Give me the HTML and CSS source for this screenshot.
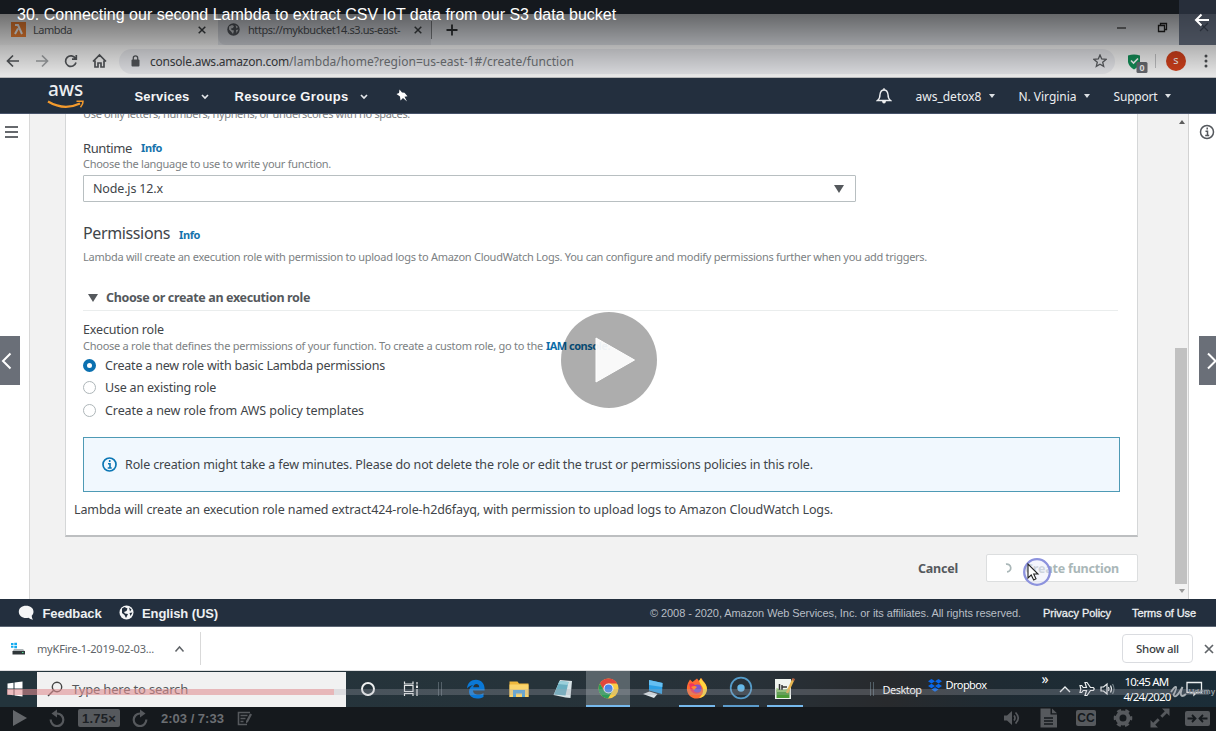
FILE: index.html
```
<!DOCTYPE html>
<html lang="en">
<head>
<meta charset="utf-8">
<title>Lambda lecture player</title>
<link rel="stylesheet" href="styles.css">
</head>
<body>
<div class="player">
  <header class="lecture-title"><span>30. Connecting our second Lambda to extract CSV IoT data from our S3 data bucket</span></header>

  <div class="tabs">
    <div class="tab tab-active">
      <svg class="fav" width="15" height="15" viewBox="0 0 15 15"><rect width="15" height="15" fill="#f58534"/><path d="M4 3h3l4 9M7 6.5 4 12" fill="none" stroke="#fff" stroke-width="2"/></svg>
      <span class="tab-name">Lambda</span>
      <svg class="x" width="8" height="8" viewBox="0 0 8 8"><path d="M.7.7l6.6 6.6M7.3.7.7 7.3" stroke="#3c4043" stroke-width="1.5"/></svg>
    </div>
    <div class="tab tab-second">
      <svg class="fav" width="13" height="13" viewBox="0 0 13 13"><circle cx="6.5" cy="6.5" r="6.2" fill="#50545a"/><path d="M2 3.5 5 2l2 1-1 2-2 .5L4.500 7 7 7.500 6 11 4.500 9 2 6.500zM8.500 2l2.500 2-1.500 1.500zM9 7l2.500-.5L9.500 10z" fill="#c4c7cb"/></svg>
      <span class="tab-url">https://mykbucket14.s3.us-east-</span>
      <svg class="x" width="8" height="8" viewBox="0 0 8 8"><path d="M.7.7l6.6 6.6M7.3.7.7 7.3" stroke="#3c4043" stroke-width="1.5"/></svg>
    </div>
    <i class="tab-sep"></i>
    <svg class="plus" width="12" height="12" viewBox="0 0 12 12"><path d="M6 .5v11M.5 6h11" stroke="#303336" stroke-width="1.8"/></svg>
    <svg class="win" width="90" height="14" viewBox="0 0 90 14"><path d="M1 8h9" stroke="#303030" stroke-width="1.2"/><path d="M42.500 5.500h6v6h-6zM44.500 5V3.500h6v6H49" fill="none" stroke="#202020" stroke-width="1.3"/><path d="m84 3 8 8m0-8-8 8" stroke="#222" stroke-width="1.2"/></svg>
  </div>

  <div class="toolbar">
    <svg width="110" height="20" viewBox="0 0 110 20" fill="none" stroke="#55585c" stroke-width="1.7"><path d="M19 10H7.500M13 4.500 7.500 10l5.500 5.500"/><path stroke="#a2a5a8" d="M36 10h11.500M42 4.500l5.500 5.500-5.500 5.500"/><path d="M75.500 7.500A5.300 5.300 0 1 0 76 11.500M76.300 4v4.200H72"/><path d="M93 10.500 99.500 4l6.500 6.500M95 9.500V16h3v-4h3v4h3V9.500"/></svg>
    <div class="omnibox">
      <svg class="lock" width="9" height="12" viewBox="0 0 9 12"><rect x=".5" y="4.500" width="8" height="7" rx="1" fill="#55585c"/><path d="M2.300 5V3a2.200 2.200 0 0 1 4.400 0v2" fill="none" stroke="#55585c" stroke-width="1.300"/></svg>
      <span class="host">console.aws.amazon.com</span><span class="path">/lambda/home?region=us-east-1#/create/function</span>
      <svg class="star" width="14" height="14" viewBox="0 0 14 14"><path d="m7 1 1.700 4 4.300.4-3.300 2.800 1 4.200L7 10.200l-3.700 2.200 1-4.200L1 5.400 5.300 5z" fill="none" stroke="#5c5f63" stroke-width="1.300"/></svg>
    </div>
    <svg class="shield" width="22" height="20" viewBox="0 0 22 20"><path d="M2 2.500Q8 .3 14 2.500V9q-1 5-6 7.500Q3 14 2 9z" fill="#13935a"/><path d="m5 7.500 2.500 2.500L12 5.500" stroke="#fff" stroke-width="1.600" fill="none"/><rect x="10.500" y="9" width="11" height="11" rx="1.500" fill="#6a6d73"/><text class="badge" x="16" y="18">0</text></svg>
    <i class="tool-sep"></i>
    <span class="avatar">s</span>
    <svg class="dots" width="4" height="14" viewBox="0 0 4 14" fill="#505356"><circle cx="2" cy="2" r="1.500"/><circle cx="2" cy="7" r="1.500"/><circle cx="2" cy="12" r="1.500"/></svg>
  </div>

  <nav class="aws">
    <div class="logo"><span>aws</span><svg width="38" height="10" viewBox="0 0 38 10"><path d="M1 1.500Q17 11 33 3.500" fill="none" stroke="#f39a2d" stroke-width="2.200"/><path d="m29.500 1.300 6.500-.1q.3 3-2.500 6" fill="none" stroke="#f39a2d" stroke-width="1.600"/></svg></div>
    <span class="services">Services</span><svg class="chev c1" width="8" height="6" viewBox="0 0 8 6"><path d="m1 1 3 3 3-3" fill="none" stroke="#e5e8eb" stroke-width="1.700"/></svg>
    <span class="groups">Resource Groups</span><svg class="chev c2" width="8" height="6" viewBox="0 0 8 6"><path d="m1 1 3 3 3-3" fill="none" stroke="#e5e8eb" stroke-width="1.700"/></svg>
    <svg class="pin" width="12" height="13" viewBox="0 0 12 13"><path d="m3.500.5 2.500 3 2.500.3 3 3.500-3 .5 2.500 4.700L7 9l-2.500 2.500-.5-4L.5 5 3 4z" fill="#fff"/></svg>
    <svg class="bell" width="16" height="16" viewBox="0 0 16 16"><path d="M1.500 12.500h13q-2.500-2-2.500-6Q11.500 2 8 2T4 6.500q0 4-2.500 6z" fill="none" stroke="#eceef0" stroke-width="1.400"/><path d="M8 .3v2" stroke="#eee" stroke-width="1.500"/><path d="M6 13h4q-.3 2.500-2 2.500T6 13" fill="#eee"/></svg>
    <span class="user">aws_detox8</span><i class="caret"></i>
    <span class="region">N. Virginia</span><i class="caret"></i>
    <span class="support">Support</span><i class="caret"></i>
  </nav>

  <main class="console">
    <aside class="left-rail"><i></i><i></i><i></i></aside>
    <section class="work">
      <div class="card">
        <p class="hint cut">Use only letters, numbers, hyphens, or underscores with no spaces.</p>
        <div class="label runtime"><span>Runtime</span><a class="info">Info</a></div>
        <p class="hint choose">Choose the language to use to write your function.</p>
        <div class="select"><span>Node.js 12.x</span><i class="tri"></i></div>
        <div class="heading"><span>Permissions</span><a class="info">Info</a></div>
        <p class="hint perm">Lambda will create an execution role with permission to upload logs to Amazon CloudWatch Logs. You can configure and modify permissions further when you add triggers.</p>
        <div class="expand"><i class="tri"></i><span>Choose or create an execution role</span></div>
        <div class="label exec">Execution role</div>
        <p class="hint iam"><span>Choose a role that defines the permissions of your function. To create a custom role, go to the</span><a>IAM console.</a></p>
        <div class="radio"><i class="dot on"></i><span class="r1">Create a new role with basic Lambda permissions</span></div>
        <div class="radio"><i class="dot"></i><span class="r2">Use an existing role</span></div>
        <div class="radio"><i class="dot"></i><span class="r3">Create a new role from AWS policy templates</span></div>
        <div class="alert">
          <svg width="15" height="15" viewBox="0 0 15 15"><circle cx="7.500" cy="7.500" r="6.500" fill="none" stroke="#0b76b4" stroke-width="1.700"/><path d="M7.700 3v2M6 6.700h2v4M5.700 11h4" fill="none" stroke="#0b76b4" stroke-width="1.600"/></svg>
          <span>Role creation might take a few minutes. Please do not delete the role or edit the trust or permissions policies in this role.</span>
        </div>
        <p class="summary">Lambda will create an execution role named extract424-role-h2d6fayq, with permission to upload logs to Amazon CloudWatch Logs.</p>
      </div>
      <div class="actions">
        <span class="cancel">Cancel</span>
        <div class="create"><svg width="12" height="12" viewBox="0 0 12 12"><path d="M4 2.200A3.900 3.900 0 1 1 5 9.900" fill="none" stroke="#aab7b8" stroke-width="1.700"/></svg><span>Create function</span>
          <svg class="pointer" width="32" height="32" viewBox="0 0 32 32"><circle cx="16" cy="16" r="12.800" fill="rgba(235,236,250,.55)" stroke="#8c92dd" stroke-width="2.300"/><path d="M7 8v14l3.200-3 2.500 5 2.300-1.200-2.300-4.800h4.300z" fill="#fff" stroke="#222" stroke-width="1.100"/></svg>
        </div>
      </div>
    </section>
    <div class="scroll"><i class="up"></i><i class="thumb"></i><i class="down"></i></div>
    <aside class="right-rail"><svg width="16" height="16" viewBox="0 0 16 16"><circle cx="8" cy="8" r="6.500" fill="none" stroke="#54585d" stroke-width="1.500"/><path d="M8.200 3.500v2M6.500 7.200h2v4M6.200 11.500h4" fill="none" stroke="#54585d" stroke-width="1.500"/></svg></aside>
  </main>

  <footer class="aws-footer">
    <svg class="bubble" width="17" height="16" viewBox="0 0 17 16"><path d="M8 .8c4.500 0 7.500 2.500 7.500 6 0 1.700-.8 3-1.800 4q0 2 1.300 4-3-.7-4.500-2C5 14 .8 11 .8 6.800.8 3.300 3.700.8 8 .8" fill="#f4f5f6"/></svg>
    <span class="feedback">Feedback</span>
    <svg class="globe" width="15" height="15" viewBox="0 0 15 15"><circle cx="7.500" cy="7.500" r="7" fill="#f4f5f6"/><path d="M3 3.500 5.500 2l3 1.500-1 2.500L5 7l1 1.500 3 .5-2 4-1.500-3L3 8zM10 2.500l2.500 2-1.500 2zM10.500 8l3-.5-2 3.500z" fill="#232f3e"/></svg>
    <span class="language">English (US)</span>
    <span class="copyright">© 2008 - 2020, Amazon Web Services, Inc. or its affiliates. All rights reserved.</span>
    <span class="privacy">Privacy Policy</span><span class="terms">Terms of Use</span>
  </footer>

  <div class="downloads">
    <svg class="drive" width="15" height="14" viewBox="0 0 15 14"><path d="M0 1h2.500v2H0zM3.300.7H6V3H3.300zM0 3.800h2.500v2H0zM3.300 3.800H6v2.400H3.300z" fill="#12aaf0"/><path d="M3 7h9l2 2.500H1.500z" fill="#aeb5b8"/><path d="M1.500 9H14v3.500H1.500z" fill="#30373a"/><path d="M11 10.500h1.500" stroke="#4fe092"/></svg>
    <span class="file">myKFire-1-2019-02-03...</span>
    <svg class="expand-up" width="11" height="8" viewBox="0 0 11 8"><path d="m1.500 6.500 4-4.500 4 4.500" fill="none" stroke="#606468" stroke-width="1.500"/></svg>
    <i class="dl-sep"></i>
    <span class="show-all"><b>Show all</b></span>
    <svg class="dl-x" width="10" height="10" viewBox="0 0 10 10"><path d="m1 1 8 8m0-8-8 8" stroke="#606468" stroke-width="1.700"/></svg>
  </div>

  <div class="taskbar">
    <svg class="start" width="16" height="16" viewBox="0 0 16 16" fill="#fff"><path d="M.5 2.500 6.500 1.700v5.800h-6zM7.500 1.500 15.500.5v7h-8zM.5 8.500h6v5.800l-6-.8zM7.500 8.500h8v7l-8-1z"/></svg>
    <div class="search"><svg width="16" height="16" viewBox="0 0 16 16"><circle cx="10" cy="6" r="4.700" fill="none" stroke="#444" stroke-width="1.400"/><path d="M6.500 9.500 1 15" stroke="#444" stroke-width="1.500"/></svg><span>Type here to search</span></div>
    <div class="cell c-cortana"><svg width="16" height="16" viewBox="0 0 16 16"><circle cx="8" cy="8" r="6" fill="none" stroke="#eef0f0" stroke-width="2"/></svg></div>
    <div class="cell c-task"><svg width="16" height="16" viewBox="0 0 16 16" fill="none" stroke="#e3e6e7" stroke-width="1.200"><path d="M1.500 4.500h8.500v6H1.500zM1.500.5V3H10V.5M1.500 15v-2.500H10V15M14 1v2.500M14 8v7"/><path d="M14 4.500v2.500" stroke-width="2"/></svg></div>
    <div class="cell c-grip"><i></i><i></i></div>
    <div class="cell c-edge"><svg width="20" height="20" viewBox="0 0 20 20"><path d="M1 9.500C1.500 4 5 .8 10 .8c5.500 0 8.600 4 8.600 9v1.700H7c.2 3 2.500 4 5 4 2 0 3.800-.5 5.500-1.500v4c-2 1-4 1.500-6.500 1.500-5 0-8-3-8-7 0-3 1.700-5 4.200-6.200C4.500 6.500 2.500 7.500 1 9.500M7.200 8.200h6C13.200 6 12 5 10.300 5S7.500 6.300 7.200 8.200" fill="#0a78d6"/></svg></div>
    <div class="cell c-folder"><svg width="20" height="18" viewBox="0 0 20 18"><path d="M.5 1.500h8l1.500 2h9.500V17H.5z" fill="#efb83d"/><path d="M.5 4.500h19V17H.5z" fill="#fad46c"/><path d="M4 10h12v7h-3v-3.500H7V17H4z" fill="#57a6d9"/></svg></div>
    <div class="cell c-note"><svg width="20" height="20" viewBox="0 0 20 20"><path d="m7 1 12 1-1.500 17-5-.5L.5 16z" fill="#d8e3e6"/><path d="m6.500 2 9 1-3 13.500L1 15.500z" fill="#6aafc1"/><path d="m6.500 2 9 1-.8 3-9.500-1z" fill="#9ad0db"/></svg></div>
    <div class="cell c-chrome running"><svg width="21" height="21" viewBox="0 0 21 21"><circle cx="10.500" cy="10.500" r="10" fill="#f9cd45"/><path d="M1.900 5.400A10 10 0 0 1 19.200 5.500H10.500L6.200 13z" fill="#e2473c"/><path d="M1.900 5.400A10 10 0 0 0 10 20.500l4.500-7.500H6.200z" fill="#2b9d58"/><circle cx="10.500" cy="10.500" r="5" fill="#f5f7fa"/><circle cx="10.500" cy="10.500" r="4" fill="#4a86ea"/></svg></div>
    <div class="cell c-pc"><svg width="22" height="20" viewBox="0 0 22 20"><path d="m7 1 13.500 3-.5 11L7 11.500z" fill="#2da0e5"/><path d="m7 1 13.500 3-.2 4L7 6z" fill="#65bff2"/><path d="m1 15 6.500-2.500 8 2.500-3.500 4z" fill="#dce3e7"/></svg></div>
    <div class="cell c-fox"><svg width="22" height="22" viewBox="0 0 22 22"><path d="M2 6l2-3.500L6.500 5 11 1.500 13 4l2-3c2 2 2 3 3.500 4.500C23 11 20.500 21.500 11 21.500 2 21.500-1 13 2 6" fill="#ff6b32"/><path d="M15 1c.5 3 6 5 6 11 0 5-4 9-8 9 3-3 4.500-5 4-9-.5-3-2.500-4-4-8z" fill="#ffd53f"/><path d="M3 7q4-2 6 1l5 1q3 4-1 7-5 2-8-2z" fill="#f3355e"/><circle cx="11.500" cy="11.500" r="4" fill="#8054c8"/><path d="M5 10q4-2 6 0l-3 3z" fill="#ff8c32"/></svg></div>
    <div class="cell c-rec"><svg width="24" height="24" viewBox="0 0 24 24"><circle cx="12" cy="12" r="10.300" fill="none" stroke="#559bc8" stroke-width="1.700"/><circle cx="12" cy="12" r="3.700" fill="#66b9e8"/></svg></div>
    <div class="cell c-img"><svg width="21" height="23" viewBox="0 0 21 23"><path d="M1 2h16v20H1z" fill="#f0f4ef"/><path d="M2.500 13h13v8h-13z" fill="#4b9b36"/><path d="M2.500 11q6 3 13 0v4h-13z" fill="#91c86d"/><path d="M5.500 7v6M8 8v5M8 10h5" stroke="#333" stroke-width="1.500"/><path d="m19.500 2-6.500 14" stroke="#e7b550" stroke-width="2.500"/><path d="m18.500 2 2 1" stroke="#b05a43" stroke-width="2"/></svg></div>
    <div class="cell c-grip2"><i></i><i></i></div>
    <span class="desktop">Desktop</span>
    <svg class="dbx" width="14" height="13" viewBox="0 0 14 13" fill="#0968eb"><path d="m3.500 0 3.500 2.200-3.500 2.300L0 2.200zM10.500 0 14 2.200l-3.500 2.300L7 2.200zM3.500 4.700 7 7 3.500 9.200 0 7zM10.500 4.700 14 7l-3.500 2.200L7 7zM7 8.200l3.500 2.200L7 12.700l-3.500-2.300z"/></svg>
    <span class="dropbox">Dropbox</span>
    <span class="more">»</span>
    <svg class="tray" width="58" height="18" viewBox="0 0 58 18" fill="none" stroke="#eceff0" stroke-width="1.200"><path d="m2 12 5-5 5 5" stroke-width="1.400"/><path d="M22 5.500h1.700l1.500 2h3.300L27 2.500h2l3.500 5h2.700q2 1.500 0 3h-2.700l-3.500 5h-2l1.500-5h-3.300l-1.500 2H22l.8-3.500z"/><path d="M43 7h2.500L49 4v10l-3.500-3H43z"/><path d="M50.500 7q1 2 0 4M52.500 5.500q2 3.500 0 7"/><path d="M54.500 4q3 5 0 10" stroke="#76838a"/></svg>
    <div class="clock"><span class="time">10:45 AM</span><span class="date">4/24/2020</span></div>
    <div class="notify"><svg width="17" height="16" viewBox="0 0 17 16"><path d="M1 1.500h14.500v10h-5L8 14v-2.500H1z" fill="none" stroke="#eceff0" stroke-width="1.300"/></svg><svg class="u" width="17" height="14" viewBox="0 0 17 14"><path d="M1 7Q5 1 6 2T3.500 10q2 5 9-8-3 8-.5 9 2 0 4-2" fill="none" stroke="#aab1b5" stroke-width="1.800"/></svg><span class="udemy">Udemy</span></div>
  </div>

  <div class="controls">
    <svg class="k-play" width="16" height="18" viewBox="0 0 16 18"><path d="M1 1v16l14-8z" fill="#63666a"/></svg>
    <svg class="k-back" width="16" height="18" viewBox="0 0 16 18"><path d="M8 4.500A6.300 6.300 0 1 1 1.700 10.500" fill="none" stroke="#56595d" stroke-width="2.200"/><path d="M8 .5v8L2.500 4.500z" fill="#56595d"/></svg>
    <span class="speed"><b>1.75×</b></span>
    <svg class="k-fwd" width="16" height="18" viewBox="0 0 16 18"><path d="M8 4.500A6.300 6.300 0 1 0 14.300 10.500" fill="none" stroke="#56595d" stroke-width="2.200"/><path d="M8 .5v8l5.500-4z" fill="#56595d"/></svg>
    <span class="elapsed">2:03 / 7:33</span>
    <svg class="k-note" width="16" height="15" viewBox="0 0 16 15" fill="none" stroke="#56595d" stroke-width="1.600"><path d="M10 13.500H1.500v-12H13M3.500 4.500h7M3.500 7.500h5M3.500 10.500h3"/><path d="m9 10 4-7.500 2 1-4 7.500-2 1.500z" fill="#56595d" stroke="none"/></svg>
    <svg class="k-vol" width="19" height="16" viewBox="0 0 19 16"><path d="M1 5.500h3L9 1v14l-5-4.500H1z" fill="#56595d"/><path d="M11 5.500q2 2.500 0 5M12.500 2.500q5.500 5.500 0 11" fill="none" stroke="#56595d" stroke-width="1.700"/></svg>
    <svg class="k-doc" width="18" height="20" viewBox="0 0 18 20"><path d="M.5.500h10v6h6.500v13H.5zM12 .5l5 4.700h-5z" fill="#56595d"/><path d="M4 10h9M4 13h9M4 16h9" stroke="#15191d" stroke-width="1.300"/></svg>
    <span class="cc">CC</span>
    <svg class="k-gear" width="20" height="20" viewBox="0 0 20 20"><circle cx="10" cy="10" r="5.500" fill="none" stroke="#56595d" stroke-width="4"/><circle cx="10" cy="10" r="7.800" fill="none" stroke="#56595d" stroke-width="3" stroke-dasharray="4.084 4.084" stroke-dashoffset="2.042"/></svg>
    <svg class="k-full" width="20" height="20" viewBox="0 0 20 20"><path d="M12 .5h7.500V8l-2.700-2.700-4.500 4.500-2-2 4.500-4.500zM8 19.500H.5V12l2.700 2.700 4.500-4.500 2 2-4.500 4.500z" fill="#56595d"/></svg>
    <svg class="k-wide" width="25" height="15" viewBox="0 0 25 15"><rect width="25" height="15" rx="2" fill="#56595d"/><path d="M2.500 7.500H10M7 4l3.500 3.500L7 11M22.500 7.500H15M18 4l-3.500 3.500L18 11" stroke="#15191d" stroke-width="1.800" fill="none"/></svg>
  </div>

  <div class="shade"></div>
  <div class="back"><svg width="16" height="14" viewBox="0 0 16 14"><path d="M15 7H2M7.500 1.500 2 7l5.500 5.500" fill="none" stroke="#fff" stroke-width="2"/></svg></div>
  <div class="progress"><i></i></div>
  <div class="prev"><svg width="12" height="18" viewBox="0 0 12 18"><path d="M10.500 1.500 3 9l7.500 7.500" fill="none" stroke="#fff" stroke-width="2"/></svg></div>
  <div class="next"><svg width="12" height="18" viewBox="0 0 12 18"><path d="M2 1.500 9.500 9 2 16.500" fill="none" stroke="#fff" stroke-width="2"/></svg></div>
  <div class="big-play"><svg width="42" height="48" viewBox="0 0 42 48"><path d="M2 2v44l38.500-22z" fill="#fff" fill-opacity=".93" stroke="#fff" stroke-linejoin="round"/></svg></div>
</div>
</body>
</html>
```
FILE: styles.css
```
*{box-sizing:border-box}
body{margin:0;background:#15191d;font-family:"Noto Sans",sans-serif;color:#3f4549;white-space:nowrap}
p{margin:0}
i{display:block;flex:none}
svg{display:block;flex:none}
span{flex:none}
.player{position:relative;width:1216px;height:731px;overflow:hidden;display:grid;grid-template-rows:14px 31px 33px 36px 485px 28px 44px 36px 24px}

/* lecture header */
.lecture-title{position:relative;z-index:3;background:#15191e;padding-left:17px;font:16px/30px "Liberation Sans",sans-serif;color:#fff;height:14px}

/* browser tabs */
.tabs{display:flex;align-items:center;background:#dee1e6;font-size:11px}
.tab{display:flex;align-items:center;height:31px}
.tab-active{width:218px;background:#f4f4f4;padding-left:11px}
.tab-name{width:166px;margin-left:7px;letter-spacing:-.48px;color:#55585c;margin-right:-1px}
.tab-second{width:213px;background:#d0d3d9;border-bottom-left-radius:8px;padding-left:9px}
.tab-url{width:166px;margin-left:8px;letter-spacing:-.43px;color:#4b4f53}
.tab-sep{width:1px;height:18px;background:#7c7f83;margin:0 14px 0 0}
.plus{margin-right:658px}
.win{margin-top:-5px;overflow:visible}

/* address row */
.toolbar{display:flex;align-items:center;background:#fbfbfb;border-bottom:1px solid #c3c5c7}
.omnibox{display:flex;align-items:center;width:996px;height:25px;margin-left:9px;padding-left:12px;border-radius:13px;background:#ebecf0;font-size:12px}
.host{width:139px;margin-left:10px;letter-spacing:-.232px;color:#3c4043}
.path{width:285px;letter-spacing:.049px;color:#73777b}
.star{margin-left:519px}
.shield{margin:3px 0 0 11px}
.badge{font:bold 9px "Liberation Sans",sans-serif;fill:#fff;text-anchor:middle}
.tool-sep{width:1px;height:14px;background:#c4c5c7;margin-left:7px}
.avatar{width:20px;height:20px;border-radius:50%;background:#d7421c;color:#fff;font-size:11px;line-height:18px;text-align:center;margin-left:10px}
.dots{margin-left:17.5px}

/* aws nav */
.aws{display:flex;align-items:center;background:#232f3e;border-bottom:1px solid #47536a;color:#eceef0;font-size:12px}
.logo{width:87.5px;margin-left:47px;height:30px;padding-left:1px}
.logo span{display:block;font:500 19px/19px "Noto Sans",sans-serif;letter-spacing:-.1px;margin-top:-1px}
.logo svg{margin:1px 0 0 -1px}
.services,.groups{font:bold 13px "Liberation Sans",sans-serif;color:#f5f6f7;margin-top:1px}
.services{width:55px;letter-spacing:.188px}
.c1{margin:3px 26px 0 11px}
.groups{width:115px;letter-spacing:.327px}
.c2{margin:3px 0 0 10px}
.pin{margin-left:28px}
.bell{margin:0 24px 0 468px}
.user{width:66px}.region{width:58px;letter-spacing:-.028px}.support{width:44px;letter-spacing:-.188px}
.user,.region,.support{margin-top:1px}
.caret{border:3.5px solid transparent;border-top:4px solid #dce0e3;border-bottom:0;margin-left:7px;margin-top:1px}
.region{margin-left:24px}.support{margin-left:24px}

/* console */
.console{display:grid;grid-template-columns:30px 1145px 14px 27px;background:#f2f2f2;overflow:hidden}
.left-rail{background:#fff;border-right:1px solid #d8d8d8;padding:12px 0 0 5px}
.left-rail i{width:13px;height:2px;background:#66696d;margin-bottom:3px}
.work{padding-left:35px;overflow:hidden}
.card{width:1073px;height:423px;background:#fff;border:1px solid #d0d2d3;border-width:0 1px 2px;border-color:#d5d7d8 #d5d7d8 #bdbfc1;padding:0 18px 0 17px;overflow:hidden}
.hint{font-size:11px;color:#7c8183}
.cut{height:16px;line-height:16px;margin-top:-8px;letter-spacing:-.331px}
.label{height:18px;line-height:18px;font-size:12.5px}
.runtime{display:flex;margin-top:17px;font-size:13px;letter-spacing:-.386px}
.info{font-weight:bold;font-size:11px;letter-spacing:-.391px;color:#1673ac}
.runtime .info{margin-left:9px}
.choose{height:14px;line-height:14px;letter-spacing:-.282px}
.select{display:flex;align-items:center;justify-content:space-between;width:773px;height:27px;margin-top:4px;border:1px solid #b8bfc1;border-radius:1px;padding:0 11px 0 9px;font-size:12.5px;letter-spacing:-.158px}
.tri{border:5px solid transparent;border-top:8px solid #55595d;border-bottom:0}
.heading{display:flex;height:22px;line-height:20px;margin-top:21px;font-size:16px;letter-spacing:-.372px}
.heading .info{margin-left:9px;line-height:24px}
.perm{height:16px;line-height:16px;margin-top:4px;letter-spacing:-.271px}
.expand{display:flex;align-items:center;height:22px;padding-bottom:4px;margin:24px 1px 0 0;border-bottom:1px solid #eaeded;padding-left:5px;font-weight:bold;font-size:12.5px;letter-spacing:-.355px;color:#55595d}
.expand span{margin-left:8px}
.exec{margin-top:9.5px;letter-spacing:-.152px}
.iam{display:flex;height:14px;line-height:14px;letter-spacing:-.256px;margin-bottom:1.5px}
.iam span{width:463px}
.iam a{font-weight:bold;letter-spacing:-.514px;color:#0b6da8}
.radio{display:flex;align-items:center;height:22.5px;font-size:12.5px}
.dot{width:13px;height:13px;border:1px solid #aeb6b9;border-radius:50%;margin-right:9px}
.dot.on{border:4px solid #0b70b0}
.r1{letter-spacing:-.201px}.r2{letter-spacing:-.21px}.r3{letter-spacing:-.082px}
.alert{display:flex;align-items:center;width:1037px;height:55px;margin-top:15px;border:1px solid #4e9ab5;background:#f1f8fe;padding-left:18px;font-size:12.5px;letter-spacing:-.135px}
.alert span{margin-left:8px}
.summary{height:18px;line-height:18px;margin:9.5px 0 0 -9px;font-size:12.5px;letter-spacing:-.104px}
.actions{display:flex;align-items:center;height:28px;margin-top:17px;padding-left:853px;font-weight:bold;font-size:12.5px}
.cancel{width:40px;letter-spacing:-.214px;color:#55595d}
.create{position:relative;display:flex;align-items:center;width:152px;height:28px;margin-left:28px;border:1px solid #dcdedf;border-radius:2px;background:#fff;color:#aab7b8;padding-left:15px}
.create span{margin-left:11px;letter-spacing:-.206px}
.pointer{position:absolute;left:34px;top:1px}
.scroll{border-right:1px solid #d2d2d2;display:flex;flex-direction:column;align-items:center;padding-top:6px}
.up{border:3.500px solid transparent;border-bottom:4px solid #5d5d5d;border-top:0}
.thumb{width:12px;height:236px;background:#c1c1c1;margin:224px 1px 5px 0}
.down{border:3.500px solid transparent;border-top:4px solid #999;border-bottom:0}
.right-rail{background:#fff;padding:10px 0 0 10px}

/* aws footer */
.aws-footer{display:flex;align-items:center;background:#232f3e;color:#edf0f2;font-family:"Liberation Sans",sans-serif;border-bottom:1px solid #5c6674}
.bubble{margin-left:18px}
.feedback,.language{font-weight:bold;font-size:13px;margin-top:1px}
.feedback{width:60px;margin-left:7.5px;letter-spacing:-.123px}
.globe{margin-left:16.5px}
.language{width:76px;margin-left:8px;letter-spacing:-.107px}
.copyright{width:371px;margin-left:432px;font-size:11px;letter-spacing:-.075px;color:#b8bec5}
.privacy,.terms{font-size:11px;-webkit-text-stroke:.3px #edf0f2}
.privacy{width:68px;margin-left:22px;letter-spacing:-.03px}
.terms{margin-left:21px;letter-spacing:-.06px}

/* download shelf */
.downloads{display:flex;align-items:center;background:#fff;border-bottom:1px solid #dedfe0;font-size:11px}
.drive{margin-left:11px}
.file{width:117px;margin-left:11px;letter-spacing:-.192px;color:#606468}
.expand-up{margin-left:20px}
.dl-sep{width:1px;height:33px;background:#d9d9d9;margin-left:15px}
.show-all{display:flex;align-items:center;justify-content:center;width:71px;height:29px;margin-left:921px;border:1px solid #dadce0;border-radius:4px;font-size:11.500px;letter-spacing:-.32px;color:#3c4043}
.show-all b{font-weight:500}
.dl-x{margin-left:11px}

/* taskbar */
.taskbar{display:flex;align-items:center;background:linear-gradient(90deg,#23343c,#26333a 45%,#283138 62%,#282a2d 73%,#1f2b33 82%,#1b2d38);color:#fff}
.start{margin:0 14px 0 7px}
.search{display:flex;align-items:center;width:309px;height:35px;background:#f1f1f1;padding-left:10px;font-size:13px;letter-spacing:-.193px;color:#55585a}
.search span{margin-left:9px}
.cell{display:flex;align-items:center;justify-content:center;height:36px;flex:none}
.c-cortana{width:44px}.c-task{width:42px}.c-grip,.c-grip2{gap:2px}
.c-grip{width:16px}
.c-grip i,.c-grip2 i{width:1px;height:14px;background:#536068}
.c-edge{width:44px;margin-left:6px}.c-folder{width:42px}.c-note{width:46px}
.c-chrome{width:44px;background:#59646a;border-bottom:2px solid #76b9ed}
.c-pc{width:46px}
.c-fox,.c-img{width:36px;border-bottom:2px solid #76b9ed}
.c-fox{margin-left:2.5px}
.c-rec{width:36px;margin:0 8px;border-bottom:2px solid #5c9ccc}
.c-grip2{width:8px;margin:0 6.5px 0 65.5px}
.desktop{width:39px;font-size:11px;letter-spacing:-.54px;margin-left:0}
.dbx{margin:-8px 4px 0 6px}
.dropbox{width:41px;font-size:11px;letter-spacing:-.542px;margin-top:-9px}
.more{font-size:14px;width:9px;margin:-21px 0 0 55px}
.tray{margin-left:7px}
.clock{display:flex;flex-direction:column;width:47px;margin-left:8px;font-size:11.500px;line-height:15px;margin-top:-1px}
.time{letter-spacing:-.771px;padding-left:1px}.date{letter-spacing:-.845px}
.notify{position:relative;margin-left:15px}
.u{position:absolute;left:-16px;top:4px}
.udemy{position:absolute;left:3px;top:6px;font:bold 8px "Liberation Sans",sans-serif;color:#909aa0}

/* player controls */
.controls{display:flex;align-items:center;background:#15191d;color:#6b6e72;font-family:"Liberation Sans",sans-serif;font-weight:bold;padding-bottom:2px}
.k-play{margin-left:12px}
.k-back{margin-left:21px}
.speed{display:flex;align-items:center;justify-content:center;width:42px;height:18px;margin:0 12px 0 13px;border-radius:2px;background:#56595d;color:#1d2125;font-size:13px;letter-spacing:.219px}
.elapsed{width:63px;margin:0 13px;font-size:13px}
.k-vol{margin-left:750px}
.k-doc{margin-left:18px}
.cc{width:20px;height:16px;margin-left:18px;border-radius:2px;background:#56595d;color:#15191d;font-size:12px;line-height:16px;text-align:center}
.k-gear{margin-left:17px}
.k-full{margin-left:17px}
.k-wide{margin-left:15px}

/* overlays */
.shade{position:absolute;inset:14px 0 auto;height:64px;background:linear-gradient(rgba(0,0,0,.54),rgba(0,0,0,.29) 50%,rgba(0,0,0,.07));z-index:2}
.back{position:absolute;z-index:4;right:0;top:0;width:37px;height:45px;background:rgba(46,54,68,.75);padding:13px 0 0 15px}
.progress{position:absolute;left:7px;top:689px;width:1202px;height:6px;background:rgba(170,170,180,.28)}
.progress i{width:327px;height:6px;background:rgba(245,130,130,.42)}
.prev,.next{position:absolute;top:336px;height:49px;background:#6a6f78;display:flex;align-items:center}
.prev{left:0;width:20px}
.next{right:0;width:17px;overflow:hidden;padding-left:7px}
.big-play{position:absolute;left:561px;top:312px;width:96px;height:96px;border-radius:50%;background:rgba(0,0,0,.32);display:flex;align-items:center;padding-left:33px}
```
